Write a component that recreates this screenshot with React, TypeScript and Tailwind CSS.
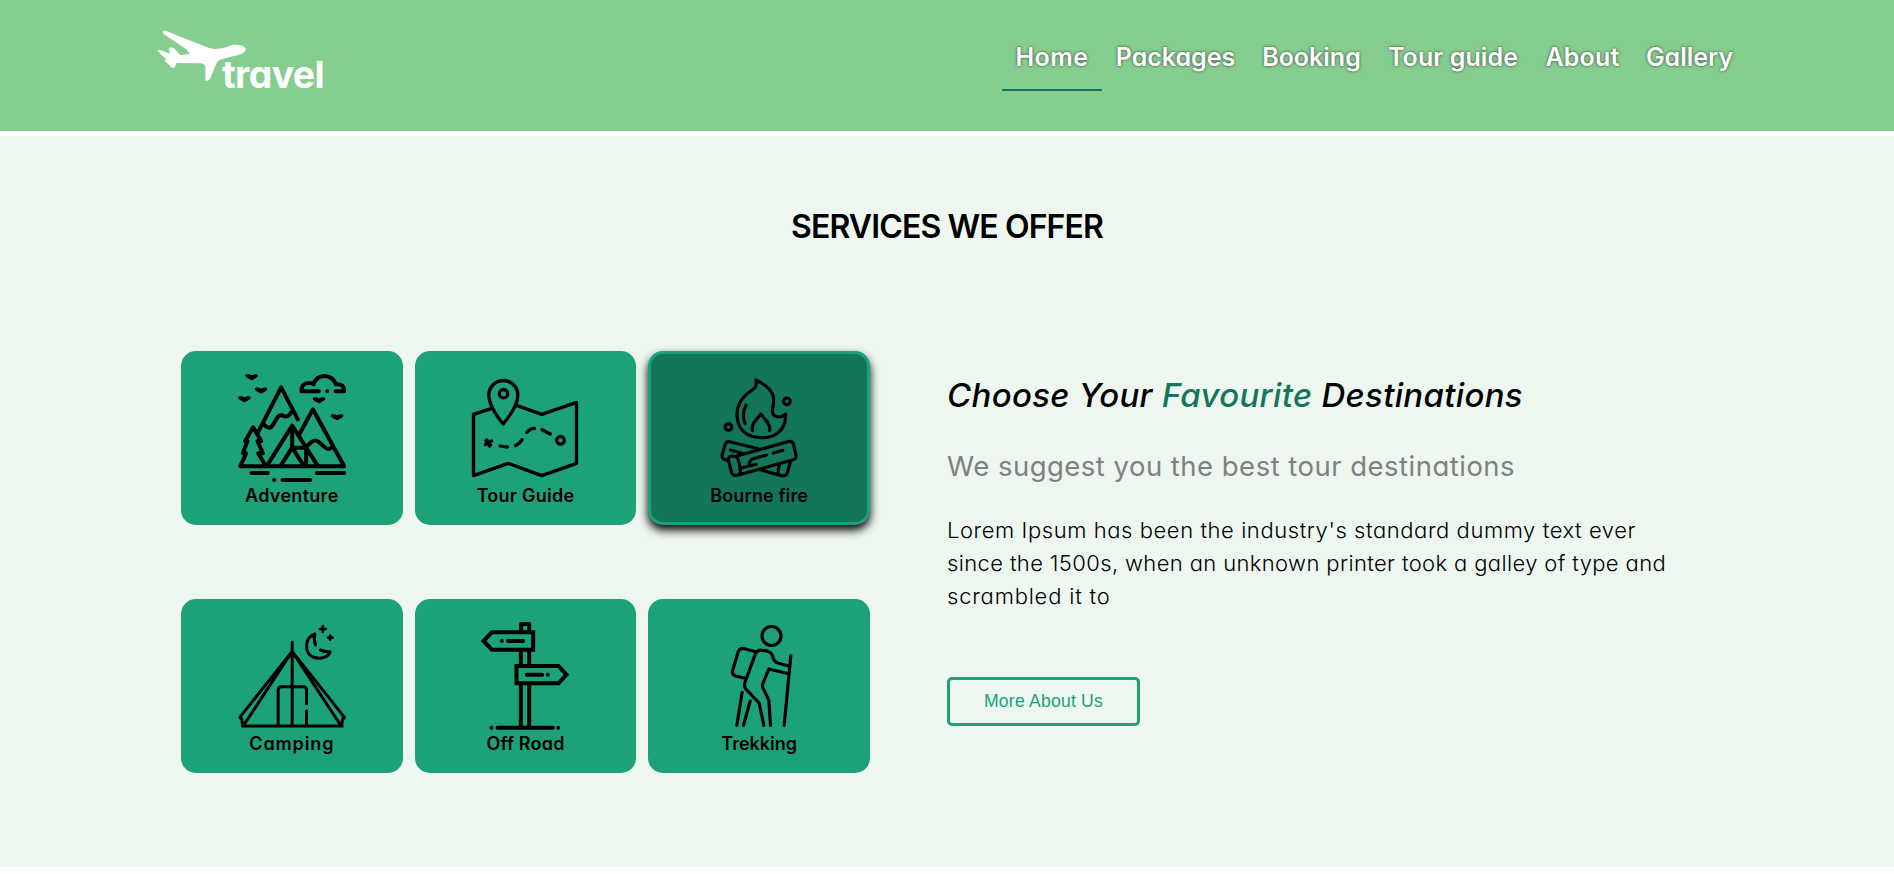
import type { ReactNode } from "react";

const navItems = [
  { label: "Home", box: "w-[100px] border-[#13765a] tracking-[0.5px]" },
  { label: "Packages", box: "w-[147px] border-transparent" },
  { label: "Booking", box: "w-[125px] border-transparent" },
  { label: "Tour guide", box: "w-[158px] border-transparent tracking-[0.1px]" },
  { label: "About", box: "w-[101px] border-transparent tracking-[0.2px]" },
  { label: "Gallery", box: "w-[113px] border-transparent" },
];

function Logo() {
  return (
    <svg className="h-16 w-[168px] overflow-visible" viewBox="51 54 504 192" fill="#fff" aria-label="travel">
      <path d="M68 64 L76 62 Q84 63 92 68 L190 107 Q205 114 222 117 Q250 117 268 108 Q278 103 288 104 L306 107 Q320 113 317 120 Q312 130 298 134 Q275 139 240 149 Q232 153 228 163 L210 207 Q206 213 196 212 L196 168 Q192 162 184 160 L110 159 L104 172 Q101 175 96 173 L74 152 L78 147 Q58 130 52 121 L60 120 Q75 125 90 131 L86 114 L96 112 Q105 116 112 126 L122 136 L150 131 Q142 120 130 112 Q90 85 68 70 Z" />
      <text x="246" y="233" className="text-[112px] font-bold tracking-[-1.8px]">travel</text>
    </svg>
  );
}

function Icon({ viewBox, width, children }: { viewBox: string; width: number; children: ReactNode }) {
  return (
    <svg
      className="size-[108px]"
      viewBox={viewBox}
      fill="none"
      stroke="#000"
      strokeWidth={width}
      strokeLinecap="round"
      strokeLinejoin="round"
      aria-hidden="true"
    >
      {children}
    </svg>
  );
}

const bird = "m0 0 h6 l9 4 l9 -4 h5 l-7 5 l-7 4 l-8 -4 z";

function AdventureIcon() {
  return (
    <Icon viewBox="203.5 102 324 324" width={12}>
      <g strokeWidth={9} fill="#000">
        <path d={`M230 107 ${bird}`} />
        <path d={`M258 147 ${bird}`} />
        <path d={`M208 173 ${bird}`} />
        <path d={`M432 176 ${bird}`} />
        <path d={`M486 227 ${bird}`} />
      </g>
      <path d="M446 154 H394 Q393 128 418 129 Q426 129 430 133 Q438 109 463 108 Q488 109 497 133 Q522 130 522 154 H496 M471 154 h.1" />
      <path d="M263 278 L333 142 L383 238 M278 250 L287 259 Q300 268 307 257 L320 235 Q326 224 336 226 Q346 232 354 228 L368 212" />
      <path d="M388 282 L428 208 L522 379 H210 L228 340 H218 L232 303 H225 L249 262 L273 303 H262 L278 340 H264 L285 375" />
      <path d="M291 376 L366 257 L442 376 M366 257 V323 H408 V376 M366 323 L332 376 M366 323 L400 376" />
      <path d="M410 319 L424 306 Q435 297 446 306 L464 322 Q476 333 488 319" />
      <path d="M244 399 H293 M440 399 H522 M337 420 H420 M312 420 h.1" />
    </Icon>
  );
}

function TourGuideIcon() {
  return (
    <Icon viewBox="199.5 102 324 324" width={10}>
      <path d="M262 205 L207 223 V407 L311 370 L412 407 L516 370 V187 L412 223 L338 197" />
      <path d="M296 252 Q253 199 253 165 A43.500 43.500 0 0 1 340 165 Q340 199 296 252 Z" />
      <circle cx="297" cy="161" r="12.500" />
      <circle cx="468" cy="301" r="11.500" />
      <path d="M244 302 L258 315 M261 303 L243 314 M247 300 L255 318 M287 318 Q300 321 309 321 M333 317 Q346 311 353 299 M367 277 Q377 265 390 265 M413 269 L437 282" />
    </Icon>
  );
}

function FireIcon() {
  return (
    <Icon viewBox="210.5 102 324 324" width={9.5}>
      <path d="M363 120 Q411 143 416 172 Q418 183 414 203 Q409 222 421 228 Q438 236 452 222 Q454 259 430 278 Q408 295 375 293 Q333 291 315 261 Q298 224 314 190 Q325 168 352 150 Q369 139 363 120 Z" />
      <path d="M334 195 Q319 223 331 251 M353 272 Q349 262 358 247 L378 222 L398 247 Q408 262 404 272" />
      <circle cx="456" cy="184" r="10" />
      <circle cx="281" cy="261" r="10" />
      <path d="M306 348 L464 304 Q472 303 476 312 L484 348 Q485 356 476 359 L310 405 Q296 410 290 398 L281 361 Q279 350 291 348 Q305 347 309 356 Q319 382 315 402" />
      <path d="M370 326 L284 305 Q274 304 271 313 L262 345 Q261 356 270 359 L279 361 M287 330 L326 341 M316 385 L364 373 M343 374 Q344 359 355 356 L395 345 M416 339 L444 331 M375 389 L440 407 Q455 409 458 397 L467 364 M434 374 Q428 391 431 403" />
    </Icon>
  );
}

function CampingIcon() {
  return (
    <Icon viewBox="203.5 96 324 324" width={9}>
      <path d="M366 157 V404 M217 408 H516 M366 184 L209 382 L215 388 L217 403 L223 402 L366 184 L523 382 L517 388 L515 403 L509 402 L366 184" />
      <path d="M324 405 V300 Q324 290 334 290 H399 Q409 290 409 300 V341 M409 362 V405" />
      <path d="M434 132 C402 143 402 189 428 201 C451 209 476 202 480 185 Q465 186 451 180 M434 132 Q430 148 436 165" />
      <path strokeWidth={8} d="M458 108 V126 M449 117 H467 M480 137 V149 M474 143 H487" />
    </Icon>
  );
}

function OffRoadIcon() {
  return (
    <Icon viewBox="199.5 96 324 324" width={12}>
      <path d="M350 127 V102 H374 V127 M349 184 V228 M374 184 V228 M349 285 V411 M374 285 V411" />
      <path strokeLinejoin="miter" d="M386 127 H262 L237 153 L262 179 H386 Z M336 228 H462 L486 254 L462 280 H336 Z" />
      <path d="M292 153 h.1 M311 153 H356 M367 254 H413 M430 254 h.1 M261 413 h.1 M279 413 H445 M461 413 h.1" />
    </Icon>
  );
}

function TrekkingIcon() {
  return (
    <Icon viewBox="210.5 96 324 324" width={9.5}>
      <circle cx="410" cy="138" r="28.500" />
      <path d="M362 185 L329 176 Q315 172 310 186 L293 243 Q291 255 302 258 L331 265" />
      <path d="M387 406 L373 339 L334 298 Q327 290 330 278 L361 194 Q367 178 382 181 Q402 182 409 190 Q414 195 415 205 Q419 217 431 220 L464 229 M461 251 L402 237 L384 281 Q381 290 386 297 L402 331 L407 406" />
      <path d="M468 197 L448 406 M322 307 L306 406 M346 333 L326 406" />
    </Icon>
  );
}

const plain = "bg-[#1ca178] pt-[23px]";
const active = "border-[3px] border-[#1ca178] bg-[#13765a] pt-5 shadow-[0_5px_10px_#000]";

const services = [
  { name: "Adventure", icon: <AdventureIcon />, card: plain, label: "tracking-[0.3px]" },
  { name: "Tour Guide", icon: <TourGuideIcon />, card: plain, label: "tracking-[0.25px]" },
  { name: "Bourne fire", icon: <FireIcon />, card: active, label: "tracking-[0.1px]" },
  { name: "Camping", icon: <CampingIcon />, card: plain, label: "tracking-[0.9px]" },
  { name: "Off Road", icon: <OffRoadIcon />, card: plain, label: "tracking-[0.2px]" },
  { name: "Trekking", icon: <TrekkingIcon />, card: plain, label: "tracking-normal" },
];

export default function App() {
  return (
    <div className="h-[874px] overflow-hidden bg-white font-['Inter',sans-serif] text-black [font-feature-settings:'cv11']">
      <header className="flex h-[136px] items-start justify-between border-b-[5px] border-white bg-[#86ce8f] pr-[148px] pl-[157px]">
        <div className="pt-7">
          <Logo />
        </div>
        <nav className="flex pt-[37px]">
          {navItems.map((item) => (
            <a
              key={item.label}
              className={`flex h-[54px] justify-center border-b-2 text-[25px] leading-10 font-semibold whitespace-nowrap text-white [text-shadow:0_0_3px_#333] ${item.box}`}
            >
              {item.label}
            </a>
          ))}
        </nav>
      </header>
      <main className="h-[731px] bg-[#edf7f0]">
        <h1 className="pt-[66px] text-center text-[32px] leading-[50px] font-semibold tracking-[-0.88px]">SERVICES WE OFFER</h1>
        <div className="flex pt-[99px] pl-[181px]">
          <section className="grid w-[689px] shrink-0 grid-cols-3 gap-x-3 gap-y-[74px]">
            {services.map((s) => (
              <div key={s.name} className={`flex h-[174px] flex-col items-center rounded-[15px] ${s.card}`}>
                {s.icon}
                <p className={`mt-[2px] text-lg leading-6 font-semibold whitespace-nowrap ${s.label}`}>{s.name}</p>
              </div>
            ))}
          </section>
          <section className="ml-[77px] pt-[19px] whitespace-nowrap">
            <h2 className="text-[33px] leading-[50px] font-medium tracking-[0.3px] italic">
              Choose Your <span className="text-[#13765a]">Favourite</span> Destinations
            </h2>
            <h3 className="mt-[26px] text-[27.5px] leading-10 font-normal tracking-[0.48px] text-[#808080]">
              We suggest you the best tour destinations
            </h3>
            <p className="mt-[28px] text-[22px] leading-[33px] font-light">
              <span className="tracking-[0.57px]">Lorem Ipsum has been the industry's standard dummy text ever</span>
              <br />
              <span className="tracking-[0.37px]">since the 1500s, when an unknown printer took a galley of type and</span>
              <br />
              <span className="tracking-[0.8px]">scrambled it to</span>
            </p>
            <button className="mt-[64px] block h-[49px] w-[193px] rounded-[5px] border-[3px] border-[#1ca178] font-['Liberation_Sans',sans-serif] text-[17.6px] tracking-[0.2px] text-[#1ca178]">
              More About Us
            </button>
          </section>
        </div>
      </main>
    </div>
  );
}
